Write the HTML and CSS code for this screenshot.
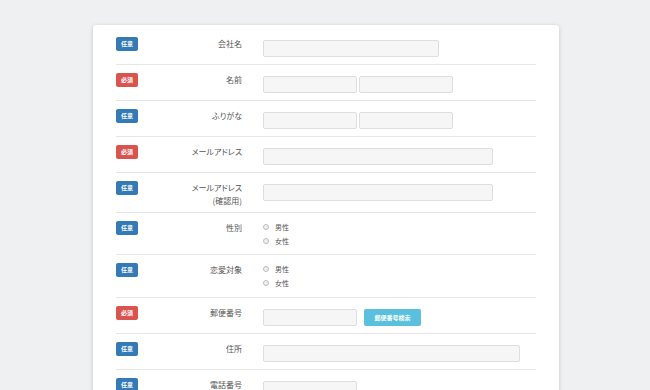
FILE: index.html
```html
<!DOCTYPE html>
<html lang="ja">
<head>
    <meta charset="UTF-8">
    <meta name="viewport" content="width=device-width, initial-scale=1.0">
    <title>お問い合わせフォーム</title>
    <link rel="stylesheet" href="styles.css">
</head>
<body>
    <div class="card">
        <form class="form">
            <div class="row">
                <span class="badge optional">任意</span>
                <label class="label">会社名</label>
                <div class="field"><input class="input w-176" type="text"></div>
            </div>
            <div class="row">
                <span class="badge required">必須</span>
                <label class="label">名前</label>
                <div class="field">
                    <input class="input w-94" type="text">
                    <input class="input w-94" type="text">
                </div>
            </div>
            <div class="row">
                <span class="badge optional">任意</span>
                <label class="label">ふりがな</label>
                <div class="field">
                    <input class="input w-94" type="text">
                    <input class="input w-94" type="text">
                </div>
            </div>
            <div class="row">
                <span class="badge required">必須</span>
                <label class="label">メールアドレス</label>
                <div class="field"><input class="input w-230" type="text"></div>
            </div>
            <div class="row">
                <span class="badge optional">任意</span>
                <label class="label">メールアドレス<br>(確認用)</label>
                <div class="field"><input class="input w-230" type="text"></div>
            </div>
            <div class="row">
                <span class="badge optional">任意</span>
                <label class="label">性別</label>
                <div class="field radios">
                    <label class="radio"><span class="dot"></span>男性</label>
                    <label class="radio"><span class="dot"></span>女性</label>
                </div>
            </div>
            <div class="row row-tall">
                <span class="badge optional">任意</span>
                <label class="label">恋愛対象</label>
                <div class="field radios">
                    <label class="radio"><span class="dot"></span>男性</label>
                    <label class="radio"><span class="dot"></span>女性</label>
                </div>
            </div>
            <div class="row">
                <span class="badge required">必須</span>
                <label class="label">郵便番号</label>
                <div class="field">
                    <input class="input w-94" type="text">
                    <button class="search" type="button">郵便番号検索</button>
                </div>
            </div>
            <div class="row">
                <span class="badge optional">任意</span>
                <label class="label">住所</label>
                <div class="field"><input class="input w-257" type="text"></div>
            </div>
            <div class="row">
                <span class="badge optional">任意</span>
                <label class="label">電話番号</label>
                <div class="field"><input class="input w-94" type="text"></div>
            </div>
        </form>
    </div>
</body>
</html>
```

FILE: styles.css
```css
body {
    margin: 0;
    padding: 25px 0 0;
    background-color: #eef0f1;
    font-family: "Noto Sans CJK JP", "Liberation Sans", sans-serif;
    color: #555;
}

.card {
    margin-left: 93px;
    width: 466px;
    background: #fff;
    border-radius: 3px;
    box-shadow: 0 1px 4px rgba(0, 0, 0, 0.18);
    padding: 4px 23px 0;
    box-sizing: border-box;
    min-height: 400px;
}

.row {
    display: flex;
    align-items: flex-start;
    padding: 8px 0 5px;
    border-bottom: 1px solid #e6e6e6;
}

.row-tall {
    padding-bottom: 6px;
}

.badge {
    flex: 0 0 22px;
    height: 14px;
    line-height: 14px;
    border-radius: 2px;
    color: #fff;
    font-size: 6px;
    font-weight: bold;
    text-align: center;
}

.optional {
    background-color: #337ab7;
}

.required {
    background-color: #d9534f;
}

.label {
    width: 104px;
    text-align: right;
    font-size: 8px;
    line-height: 13px;
    color: #555;
    font-feature-settings: "palt";
}

.field {
    margin-left: 21px;
    min-height: 22px;
    display: flex;
    align-items: flex-start;
    gap: 2px;
}

.input {
    margin-top: 3px;
    height: 17px;
    box-sizing: border-box;
    border: 1px solid #dedede;
    border-radius: 2px;
    background-color: #f6f6f6;
    padding: 0 4px;
}

.w-94 { width: 94px; }
.w-176 { width: 176px; }
.w-230 { width: 230px; }
.w-257 { width: 257px; }

.radios {
    flex-direction: column;
    gap: 0;
    margin: -1px 0 1px 21px;
}

.radio {
    display: flex;
    align-items: center;
    height: 14px;
    font-size: 7px;
    color: #555;
}

.dot {
    width: 4px;
    height: 4px;
    border: 1px solid #bdbdbd;
    border-radius: 50%;
    background: #f0f0f0;
    margin-right: 6px;
}

.search {
    margin: 3px 0 0 5px;
    width: 57px;
    height: 17px;
    border: none;
    border-radius: 2px;
    background-color: #5bc0de;
    color: #fff;
    font-family: inherit;
    font-size: 6px;
    font-weight: bold;
    padding: 0;
}
```
